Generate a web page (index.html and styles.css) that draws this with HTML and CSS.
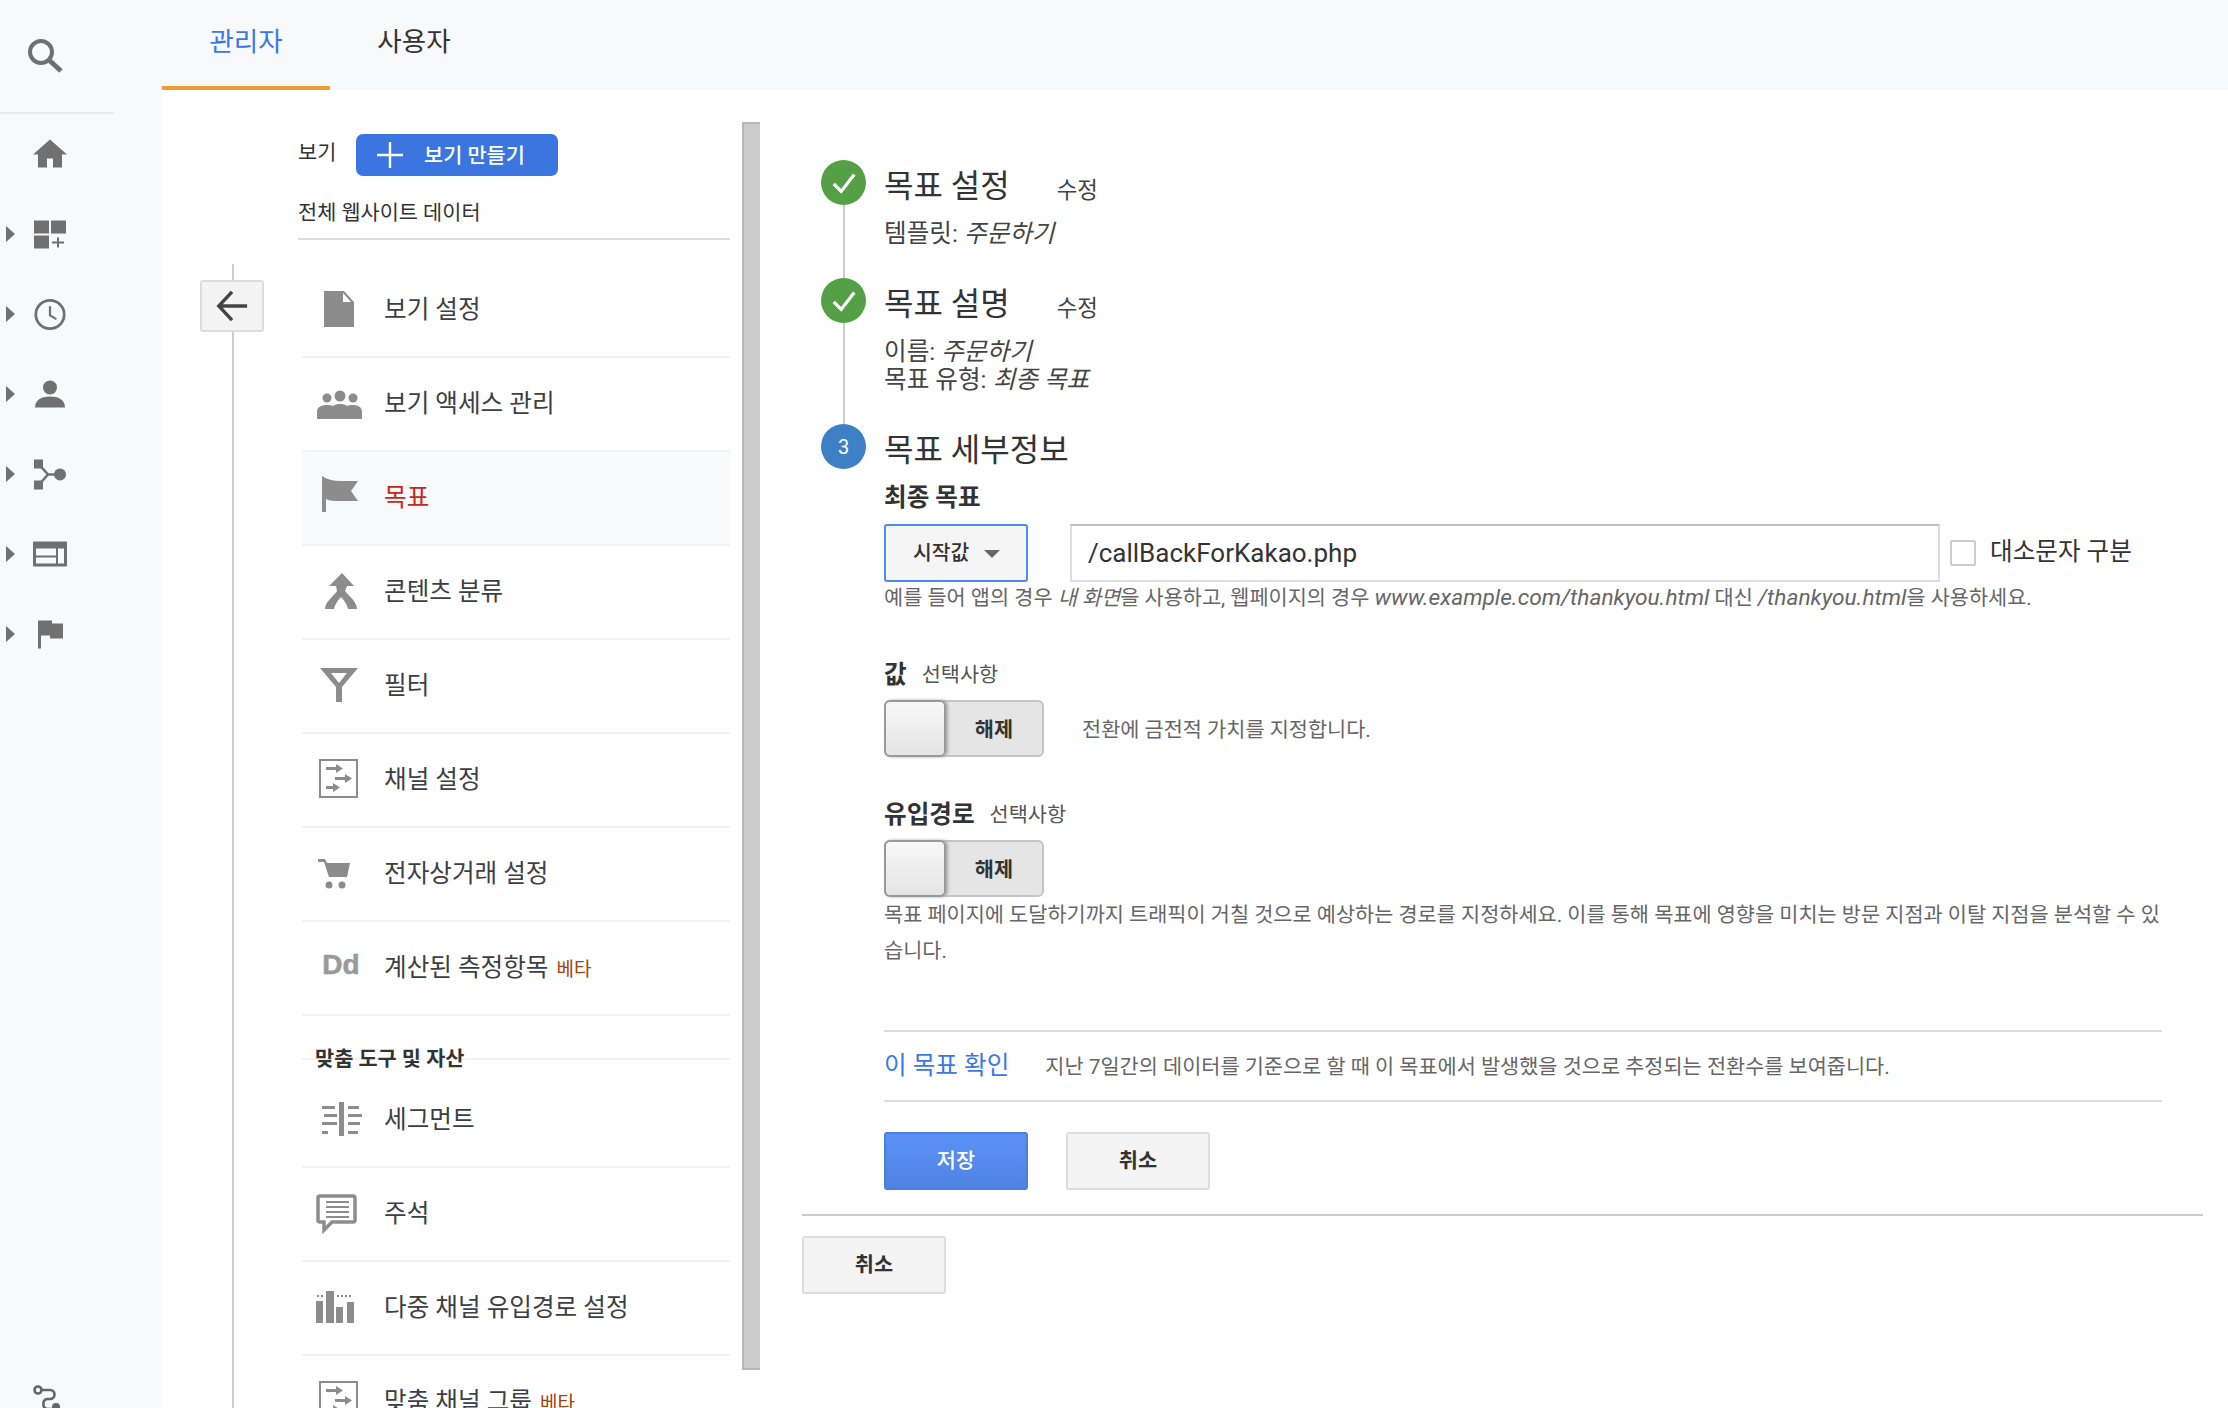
FILE: index.html
```html
<!DOCTYPE html>
<html lang="ko">
<head>
<meta charset="utf-8">
<title>목표 설정</title>
<link rel="stylesheet" href="styles.css">
</head>
<body>
<div class="app">
  <aside class="rail">
    <div class="rail-search">
      <svg class="rail-search-icon" viewBox="0 0 36 36"><circle cx="14" cy="14" r="11" fill="none" stroke="#707070" stroke-width="4"/><path d="M22 22l12 11" stroke="#707070" stroke-width="5" fill="none"/></svg>
    </div>
    <div class="rail-item"><span class="rail-noarrow"></span>
      <svg class="rail-icon" viewBox="0 0 36 32"><path d="M18 1L1 16h5v13h9v-9h6v9h9V16h5z" fill="#707070"/></svg></div>
    <div class="rail-item"><span class="rail-arrow"></span>
      <svg class="rail-icon" viewBox="0 0 36 32"><path d="M2 2h15v13H2zM19 2h15v13H19zM2 17h15v13H2zM25 19h2v4h5v2h-5v4h-2v-4h-5v-2h5z" fill="#707070"/></svg></div>
    <div class="rail-item"><span class="rail-arrow"></span>
      <svg class="rail-icon" viewBox="0 0 36 36"><circle cx="18" cy="18" r="15.5" fill="none" stroke="#707070" stroke-width="3"/><path d="M18 9v10l7 4" fill="none" stroke="#707070" stroke-width="2.4"/></svg></div>
    <div class="rail-item"><span class="rail-arrow"></span>
      <svg class="rail-icon" viewBox="0 0 36 32"><circle cx="18" cy="9" r="7" fill="#707070"/><path d="M3 29c0-8 7-11 15-11s15 3 15 11z" fill="#707070"/></svg></div>
    <div class="rail-item"><span class="rail-arrow"></span>
      <svg class="rail-icon" viewBox="0 0 36 32"><path d="M2 1h9v9H2zM2 22h9v9H2z" fill="#707070"/><circle cx="28" cy="16" r="6" fill="#707070"/><path d="M8 7l8 9-8 9M16 16h12" fill="none" stroke="#707070" stroke-width="2.6"/></svg></div>
    <div class="rail-item"><span class="rail-arrow"></span>
      <svg class="rail-icon" viewBox="0 0 36 32"><path fill-rule="evenodd" d="M2 3h32a1 1 0 0 1 1 1v23a1 1 0 0 1-1 1H2a1 1 0 0 1-1-1V4a1 1 0 0 1 1-1zM4 10v7h20v-7zM4 19v6h20v-6zM26 10v15h6V10z" fill="#707070"/></svg></div>
    <div class="rail-item"><span class="rail-arrow"></span>
      <svg class="rail-icon" viewBox="0 0 36 32"><path d="M6 2h14v3h11v15H18v-3H9v13H6z" fill="#707070"/></svg></div>
    <div class="rail-bottom">
      <svg class="rail-route" viewBox="0 0 36 36"><circle cx="8" cy="6" r="3.5" fill="none" stroke="#666" stroke-width="2.6"/><path d="M12 6h8c6 0 6 9 0 9h-2c-6 0-6 9-1 10h6" fill="none" stroke="#666" stroke-width="2.6"/><circle cx="26" cy="23" r="4" fill="#666"/></svg>
    </div>
  </aside>

  <div class="main">
    <nav class="tabs">
      <div class="tab tab-active">관리자</div>
      <div class="tab">사용자</div>
    </nav>
    <div class="body">
      <div class="back-col">
        <div class="back-line"></div>
        <div class="back-btn">
          <svg viewBox="0 0 36 36" class="back-icon"><path d="M34 18H4M18 3L4 18l14 15" fill="none" stroke="#444" stroke-width="3.600"/></svg>
        </div>
      </div>

      <div class="nav-col">
        <div class="view-head">
          <span class="view-label">보기</span>
          <div class="create-btn"><svg class="plus" viewBox="0 0 26 26"><path d="M13 0v26M0 13h26" stroke="#fff" stroke-width="2.4"/></svg><span class="create-text">보기 만들기</span></div>
        </div>
        <div class="view-name">전체 웹사이트 데이터</div>
        <ul class="nav-list">
          <li class="nav-row"><svg class="nav-icon" viewBox="0 0 48 48"><path d="M12 7h20l10 11v25H12z" fill="#8c8c8c"/><path d="M31 9v9h8z" fill="#fff"/></svg><span>보기 설정</span></li>
          <li class="nav-row"><svg class="nav-icon" viewBox="0 0 48 48"><circle cx="28" cy="18" r="5.5" fill="#8c8c8c"/><circle cx="15" cy="20" r="4.500" fill="#8c8c8c"/><circle cx="41" cy="20" r="4.500" fill="#8c8c8c"/><path d="M5 41v-7c0-5 4-7 10-7 3 0 4.500.5 6 1 2-1.500 4-2 7-2s5 .5 7 2c1.500-.5 3-1 6-1 5 0 9 2 9 7v7z" fill="#8c8c8c"/></svg><span>보기 액세스 관리</span></li>
          <li class="nav-row nav-row-active"><svg class="nav-icon" viewBox="0 0 48 48"><path d="M10 4c6 4 12 5 18 5h18l-7 10 7 10H24c-5 0-8-1-10-2v13h-4z" fill="#8c8c8c"/></svg><span>목표</span></li>
          <li class="nav-row"><svg class="nav-icon" viewBox="0 0 48 48"><path d="M30 7l12 13h-7l-2 5c4 5 12 11 12 18h-9c-1-5-5-10-7-12-2 2-6 7-7 12h-9c0-7 8-12 12-18l-1-5h-7z" fill="#8c8c8c"/></svg><span>콘텐츠 분류</span></li>
          <li class="nav-row"><svg class="nav-icon" viewBox="0 0 48 48"><path fill-rule="evenodd" d="M8 8h38L30 27v15h-6V27zM19 13l8 10 8-10z" fill="#8c8c8c"/></svg><span>필터</span></li>
          <li class="nav-row"><svg class="nav-icon" viewBox="0 0 48 48"><rect x="8" y="6" width="37" height="37" fill="none" stroke="#8c8c8c" stroke-width="2"/><path d="M14 13h10v-3l7 4.500-7 4.500v-3H14zM23 23h10v-3l7 4.500-7 4.500v-3H23zM14 32h7v-3l7 4.500-7 4.500v-3H14z" fill="#8c8c8c"/></svg><span>채널 설정</span></li>
          <li class="nav-row"><svg class="nav-icon" viewBox="0 0 48 48"><path d="M6 11h7l2 4h23l-3 14H17L12 14H6z" fill="#8c8c8c"/><circle cx="17" cy="37" r="3.500" fill="#8c8c8c"/><circle cx="30" cy="37" r="3.500" fill="#8c8c8c"/></svg><span>전자상거래 설정</span></li>
          <li class="nav-row"><span class="nav-dd">Dd</span><span>계산된 측정항목</span><span class="beta">베타</span></li>
          <li class="nav-section"><span>맞춤 도구 및 자산</span></li>
          <li class="nav-row"><svg class="nav-icon" viewBox="0 0 48 48"><path d="M27 8h5v34h-5zM10 12h13v3H10zM12 20h13v3H12zM10 28h15v3H10zM10 37h6v3H10zM36 12h11v3H36zM36 20h14v3H36zM36 28h12v3H36zM36 37h10v3H36z" fill="#8c8c8c"/></svg><span>세그먼트</span></li>
          <li class="nav-row"><svg class="nav-icon" viewBox="0 0 48 48"><path d="M8 8h33a2 2 0 0 1 2 2v22a2 2 0 0 1-2 2H20l-8 8v-8H8a2 2 0 0 1-2-2V10a2 2 0 0 1 2-2z" fill="none" stroke="#8c8c8c" stroke-width="3.500"/><path d="M14 13h23v2H14zM14 18h23v2H14zM14 23h23v2H14zM14 28h23v2H14z" fill="#8c8c8c"/></svg><span>주석</span></li>
          <li class="nav-row"><svg class="nav-icon" viewBox="0 0 48 48"><path d="M4 19h7v22H4zM14 9h8v32h-8zM24 25h7v16h-7zM35 20h7v21h-7zM5 13h2v2H5zM9 13h2v2H9zM25 13h2v2h-2zM29 13h2v2h-2zM33 13h2v2h-2zM37 13h2v2h-2z" fill="#8c8c8c"/></svg><span>다중 채널 유입경로 설정</span></li>
          <li class="nav-row"><svg class="nav-icon" viewBox="0 0 48 48"><rect x="8" y="6" width="37" height="37" fill="none" stroke="#8c8c8c" stroke-width="2"/><path d="M14 13h10v-3l7 4.500-7 4.500v-3H14zM23 23h10v-3l7 4.500-7 4.500v-3H23zM14 32h7v-3l7 4.500-7 4.500v-3H14z" fill="#8c8c8c"/></svg><span>맞춤 채널 그룹</span><span class="beta">베타</span></li>
        </ul>
      </div>

      <div class="scrollbar"></div>

      <div class="pane">
        <section class="step step-one">
          <div class="marker"><div class="dot dot-done"><svg class="check" viewBox="0 0 30 30"><path d="M4 16l8 8L26 6" fill="none" stroke="#fff" stroke-width="3.500"/></svg></div><div class="marker-line"></div></div>
          <div class="step-body">
            <div class="step-title"><h2>목표 설정</h2><span class="edit">수정</span></div>
            <p class="step-detail">템플릿: <em>주문하기</em></p>
          </div>
        </section>
        <section class="step step-two">
          <div class="marker"><div class="dot dot-done"><svg class="check" viewBox="0 0 30 30"><path d="M4 16l8 8L26 6" fill="none" stroke="#fff" stroke-width="3.500"/></svg></div><div class="marker-line"></div></div>
          <div class="step-body">
            <div class="step-title"><h2>목표 설명</h2><span class="edit">수정</span></div>
            <p class="step-detail">이름: <em>주문하기</em></p>
            <p class="step-detail-next">목표 유형: <em>최종 목표</em></p>
          </div>
        </section>
        <section class="step">
          <div class="marker"><div class="dot dot-current">3</div></div>
          <div class="step-body step-body-wide">
            <div class="step-title"><h2>목표 세부정보</h2></div>
            <h3 class="field-title">최종 목표</h3>
            <div class="dest-row">
              <div class="select"><span>시작값</span><i class="caret"></i></div>
              <div class="input">/callBackForKakao.php</div>
              <div class="checkbox"></div>
              <span class="check-label">대소문자 구분</span>
            </div>
            <p class="hint">예를 들어 앱의 경우 <em>내 화면</em>을 사용하고, 웹페이지의 경우 <em class="latin">www.example.com/thankyou.html</em> 대신 <em class="latin">/thankyou.html</em>을 사용하세요.</p>

            <div class="opt-title opt-value"><strong>값</strong><span>선택사항</span></div>
            <div class="toggle-row">
              <div class="toggle"><div class="toggle-handle"></div><span>해제</span></div>
              <span class="toggle-note">전환에 금전적 가치를 지정합니다.</span>
            </div>

            <div class="opt-title opt-funnel"><strong>유입경로</strong><span>선택사항</span></div>
            <div class="toggle-row">
              <div class="toggle"><div class="toggle-handle"></div><span>해제</span></div>
            </div>
            <p class="funnel-note">목표 페이지에 도달하기까지 트래픽이 거칠 것으로 예상하는 경로를 지정하세요. 이를 통해 목표에 영향을 미치는 방문 지점과 이탈 지점을 분석할 수 있<br>습니다.</p>

            <div class="verify">
              <a class="verify-link">이 목표 확인</a>
              <span class="verify-text">지난 7일간의 데이터를 기준으로 할 때 이 목표에서 발생했을 것으로 추정되는 전환수를 보여줍니다.</span>
            </div>
            <div class="actions">
              <div class="btn btn-primary">저장</div>
              <div class="btn">취소</div>
            </div>
          </div>
        </section>
        <div class="pane-foot">
          <div class="btn">취소</div>
        </div>
      </div>
    </div>
  </div>
</div>
</body>
</html>
```

FILE: styles.css
```css
* { box-sizing: border-box; }
html, body { margin: 0; padding: 0; background: #fff; }
body { font-family: Roboto, "Noto Sans CJK KR", sans-serif; color: #333; }
h2, h3, p, ul, li { margin: 0; padding: 0; list-style: none; font-weight: 400; }

.app { display: flex; width: 2228px; height: 1408px; overflow: hidden; }

/* rail */
.rail { width: 162px; flex: none; background: #f8f9fa; display: flex; flex-direction: column; overflow: hidden; }
.rail-search { width: 114px; height: 114px; flex: none; border-bottom: 2px solid #e8eaed; padding: 38px 0 0 27px; }
.rail-search-icon { display: block; width: 36px; height: 36px; }
.rail-item { height: 80px; flex: none; display: flex; align-items: center; padding-left: 6px; }
.rail-arrow { width: 0; height: 0; border-left: 9px solid #707070; border-top: 8px solid transparent; border-bottom: 8px solid transparent; }
.rail-noarrow { width: 9px; }
.rail-icon { width: 36px; height: 33px; margin-left: 17px; display: block; }
.rail-bottom { margin-top: 710px; padding: 0 0 0 30px; flex: none; }
.rail-route { width: 36px; height: 36px; display: block; }

/* main */
.main { flex: 1; display: flex; flex-direction: column; min-width: 0; }
.tabs { height: 90px; flex: none; background: #f8f9fa; display: flex; }
.tab { width: 168px; height: 90px; text-align: center; font-size: 26.6px; line-height: 84px; color: #333; }
.tab-active { color: #3b78e7; border-bottom: 4px solid #f29a33; background: #f8f9fa; }

.body { flex: 1; display: flex; min-height: 0; overflow: hidden; }

.back-col { width: 136px; flex: none; position: relative; padding: 174px 0 0 70px; }
.back-line { width: 2px; height: 100%; background: #ccc; }
.back-btn { position: absolute; left: 38px; top: 190px; width: 64px; height: 52px; background: #f4f4f4; border: 2px solid #ddd; border-radius: 3px; display: flex; align-items: center; justify-content: center; }
.back-icon { width: 34px; height: 36px; display: block; }

.nav-col { width: 444px; flex: none; padding: 44px 12px 0 0; }
.view-head { display: flex; align-items: center; height: 42px; }
.view-label { font-size: 20.8px; width: 58px; color: #333; padding-bottom: 8px; }
.create-btn { width: 202px; height: 42px; background: #3b75e0; border-radius: 7px; display: flex; align-items: center; color: #fff; font-size: 20.8px; font-weight: 500; padding-left: 21px; }
.create-text { padding-bottom: 3px; }
.plus { width: 26px; height: 26px; margin-right: 21px; display: block; }
.view-name { font-size: 20.8px; line-height: 28px; margin-top: 23px; padding-bottom: 11px; border-bottom: 2px solid #ddd; color: #333; height: 41px; }
.nav-list { margin: 24px 0 0 4px; }
.nav-row { height: 94px; display: flex; align-items: center; padding: 0 0 6px 10px; border-bottom: 2px solid #f3f3f3; font-size: 24.6px; color: #3c4043; }
.nav-row-active { background: #f8f9fa; color: #c5281c; }
.nav-icon { width: 48px; height: 48px; margin: 2px 24px 0 0; display: block; flex: none; overflow: visible; filter: blur(.5px); }
.nav-dd { width: 48px; margin-right: 24px; padding-left: 10px; text-align: center; font: 700 28px "Liberation Sans", sans-serif; -webkit-text-stroke: .6px #9a9a9a; color: #9a9a9a; flex: none; }
.beta { font-size: 19px; color: #a5400f; margin-left: 8px; margin-top: 4px; }
.nav-section { height: 58px; font-size: 20.8px; font-weight: 700; color: #333; padding-left: 13px; position: relative; }
.nav-section::after { content: ""; position: absolute; left: 0; right: 0; top: 42px; height: 2px; background: #f3f3f3; }
.nav-section span { position: relative; z-index: 1; display: block; line-height: 86px; }

.scrollbar { width: 18px; height: 1248px; margin-top: 32px; flex: none; background: #ccc; border-left: 2px solid #b8b8b8; border-top: 2px solid #b8b8b8; border-bottom: 2px solid #b8b8b8; }

/* pane */
.pane { width: 1401px; flex: none; margin-left: 42px; padding-top: 70px; }
.step { display: flex; gap: 18px; padding-left: 19px; }
.step-one { height: 118px; }
.step-two { height: 146px; }
.marker { width: 45px; flex: none; display: flex; flex-direction: column; align-items: center; }
.dot { width: 45px; height: 45px; border-radius: 50%; flex: none; display: flex; align-items: center; justify-content: center; color: #fff; font-size: 20px; }
.dot-done { background: #55a046; }
.dot-current { background: #3d80c6; }
.check { width: 28px; height: 28px; display: block; }
.marker-line { width: 2px; flex: 1; background: #ccc; }
.step-body { flex: none; }
.step-body-wide { width: 1278px; }
.step-title { display: flex; align-items: center; height: 50px; }
.step-title h2 { font-size: 32px; color: #333; margin-bottom: 4px; }
.edit { font-size: 22.4px; color: #444; margin-left: 47px; margin-top: 5px; }
.step-detail { font-size: 24.6px; line-height: 28px; margin-top: 10px; color: #444; }
.step-detail-next { font-size: 24.6px; line-height: 28px; color: #444; }
.field-title { font-size: 24.6px; font-weight: 700; line-height: 30px; margin-top: 9px; color: #333; }
.dest-row { display: flex; align-items: center; margin-top: 11px; height: 58px; }
.select { width: 144px; height: 58px; flex: none; background: #f5f5f5; border: 2px solid #4d8bf0; border-radius: 3px; display: flex; align-items: center; padding: 0 0 4px 27px; font-size: 20.4px; font-weight: 500; color: #333; }
.caret { width: 0; height: 0; border-top: 8px solid #666; border-left: 8px solid transparent; border-right: 8px solid transparent; margin-left: 15px; margin-top: 6px; }
.input { width: 870px; height: 58px; margin-left: 42px; flex: none; background: #fff; border: 2px solid #ddd; border-top-color: #c0c0c0; padding-left: 16px; font-size: 26px; line-height: 54px; color: #333; }
.checkbox { width: 26px; height: 26px; flex: none; margin-left: 10px; border: 2px solid #ccc; border-radius: 2px; background: #fff; }
.check-label { font-size: 24.6px; margin-left: 14px; padding-bottom: 8px; color: #333; white-space: nowrap; }
.hint { font-size: 20.8px; line-height: 28px; margin-top: 2px; color: #666; white-space: nowrap; }
.latin { font-size: 22.7px; }
.opt-title { display: flex; align-items: center; height: 30px; }
.opt-title strong { font-size: 24.6px; font-weight: 700; color: #333; padding-bottom: 3px; }
.opt-title span { font-size: 20.8px; color: #555; margin-left: 15px; }
.opt-value { margin-top: 46px; }
.opt-funnel { margin-top: 41px; }
.toggle-row { display: flex; align-items: center; margin-top: 12px; height: 57px; }
.toggle { width: 160px; height: 57px; flex: none; border: 2px solid #c4c4c4; border-radius: 6px; background: #e5e5e5; display: flex; align-items: center; font-size: 20.8px; font-weight: 700; color: #333; }
.toggle-handle { width: 62px; height: 57px; margin: -2px 0 -2px -2px; flex: none; border: 2px solid #999; border-radius: 6px; background: linear-gradient(#f8f8f8, #e4e4e4); box-shadow: 2px 0 3px #aaa; }
.toggle span { flex: 1; text-align: center; padding: 0 0 2px 0; }
.toggle-note { font-size: 20.8px; color: #666; margin-left: 38px; padding-bottom: 2px; }
.funnel-note { font-size: 20.8px; line-height: 36px; color: #666; white-space: nowrap; }
.verify { margin-top: 61px; height: 72px; border-top: 2px solid #ddd; border-bottom: 2px solid #ddd; display: flex; align-items: center; }
.verify-link { font-size: 24.6px; color: #3b78e7; padding-bottom: 6px; }
.verify-text { font-size: 20.8px; color: #666; margin-left: 36px; padding-bottom: 2px; }
.actions { display: flex; gap: 38px; margin-top: 30px; }
.btn { width: 144px; height: 58px; background: #f4f4f4; border: 2px solid #ddd; border-radius: 3px; display: flex; align-items: center; justify-content: center; font-size: 20.8px; font-weight: 700; color: #333; padding-bottom: 4px; }
.btn-primary { background: linear-gradient(#5b92f5, #4f83e3); border-color: #4a80e4; color: #fff; font-weight: 500; }
.pane-foot { border-top: 2px solid #ccc; margin-top: 24px; padding-top: 20px; }
```
